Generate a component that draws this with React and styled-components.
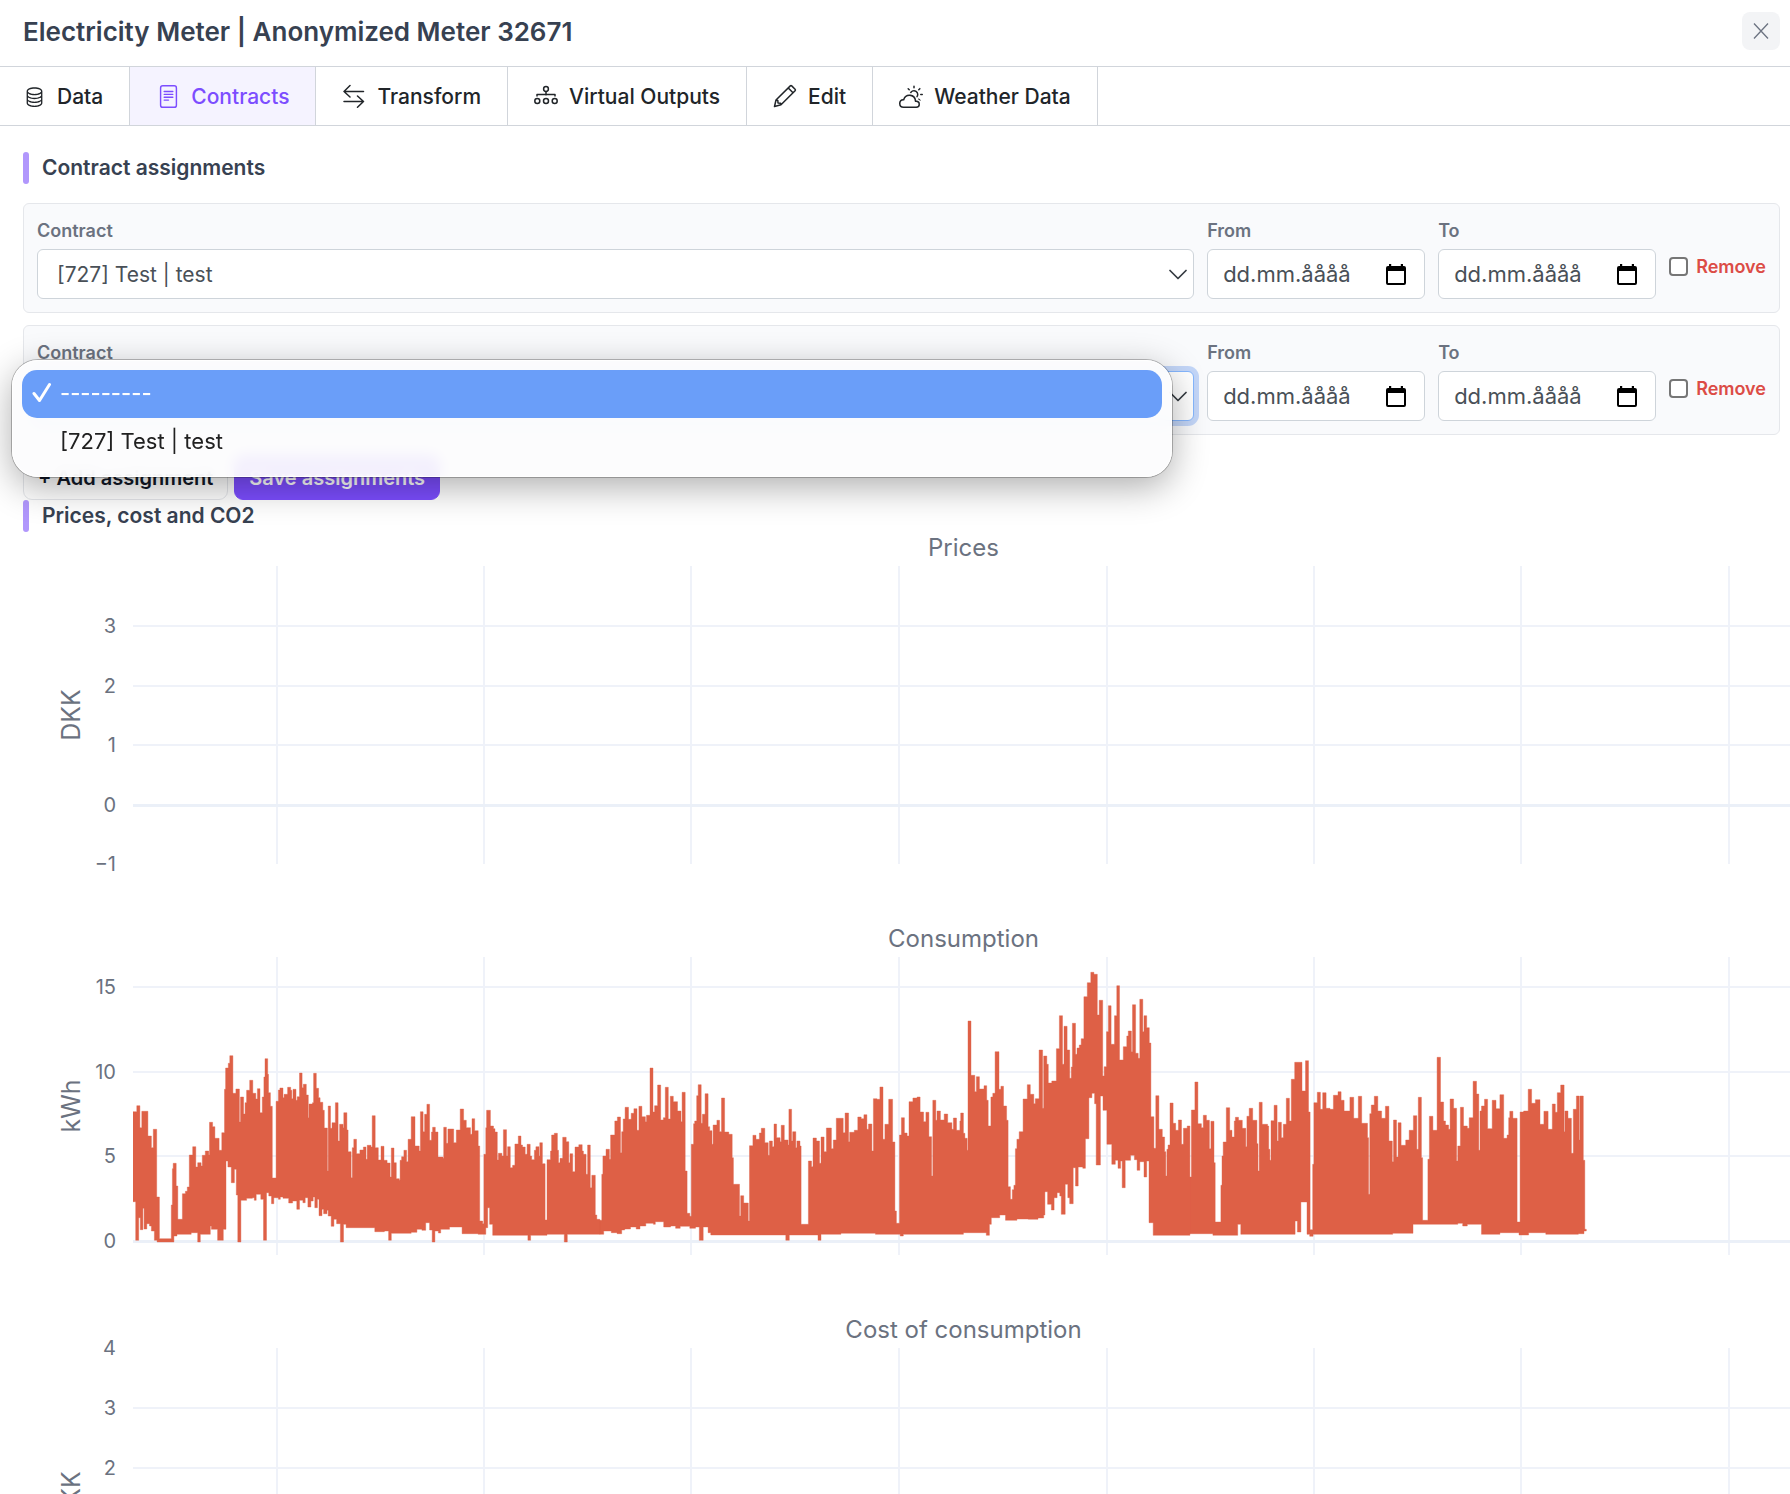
import React from "react";
import styled, { createGlobalStyle } from "styled-components";
import { BsDatabase, BsFileText, BsCloudSun } from "react-icons/bs";

const GlobalStyle = createGlobalStyle`
    *{
        box-sizing: border-box;
    }
    body{
        margin: 0;
        background: #fff;
        color: #212529;
        font-family: Inter, "Liberation Sans", sans-serif;
        font-size: 21px;
    }
    button, input, select{
        font-family: inherit;
    }
`

const TransformIcon = () => (
    <svg width="24" height="24" viewBox="0 0 24 24" fill="none" stroke="currentColor" strokeWidth="1.5" strokeLinecap="round" strokeLinejoin="round">
        <path d="M21.500 7.500H2M8 1.500 2 7.500 8 13M2 17.500H21.500M15.500 12 21.500 17.500 15.500 23.200" />
    </svg>
)

const OutputsIcon = () => (
    <svg width="24" height="24" viewBox="0 0 24 24" fill="none" stroke="currentColor" strokeWidth="1.5">
        <circle cx="12" cy="5" r="2.4" />
        <circle cx="3.3" cy="17" r="2.5" />
        <circle cx="12" cy="17" r="2.5" />
        <circle cx="20.7" cy="17" r="2.5" />
        <path d="M12 7.500v4M3 12.500v-2h18v2" strokeLinejoin="round" />
    </svg>
)

const PencilIcon = () => (
    <svg width="24" height="24" viewBox="0 0 24 24" fill="none" stroke="currentColor" strokeWidth="1.5" strokeLinejoin="round">
        <path d="M1.500 22.500 3 16 17.300 1.900Q18 1.200 18.700 1.900L22.100 5.300Q22.800 6 22.100 6.700L8 20.800ZM15.300 4 20 8.700M3 16 4.800 16.400 5 18.900 7.600 19.200 8 20.800" />
    </svg>
)

const CloseIcon = () => (
    <svg width="16" height="18" viewBox="0 0 16 18" fill="none" stroke="currentColor" strokeWidth="1.3">
        <path d="M1 1.500 15 16.500M15 1.500 1 16.500" />
    </svg>
)

const ChevronIcon = () => (
    <svg width="18" height="11" viewBox="0 0 18 11" fill="none" stroke="#343a40" strokeWidth="1.7" strokeLinecap="round" strokeLinejoin="round">
        <path d="M1 1.500 9 9.500 17 1.500" />
    </svg>
)

const CalendarIcon = () => (
    <svg width="20" height="21" viewBox="0 0 20 21">
        <path fill="#000" fillRule="evenodd" d="M3 0h2.200v2h9.600V0H17v2h1q2 0 2 2v15q0 2-2 2H2q-2 0-2-2V4q0-2 2-2h1ZM2 7v12h16V7Z" />
    </svg>
)

const CheckIcon = () => (
    <svg width="20" height="21" viewBox="0 0 20 21" fill="none" stroke="#fff" strokeWidth="3" strokeLinecap="round" strokeLinejoin="round">
        <path d="M2 11.500 7.500 18.500 17.500 2.500" />
    </svg>
)

const tabs = [
    { name: "Data", icon: <BsDatabase size={21} /> },
    { name: "Contracts", icon: <BsFileText size={23} />, active: true },
    { name: "Transform", icon: <TransformIcon /> },
    { name: "Virtual Outputs", icon: <OutputsIcon /> },
    { name: "Edit", icon: <PencilIcon /> },
    { name: "Weather Data", icon: <BsCloudSun size={24} /> },
]

// Meter readings as steps: each pair is [time, level] and holds until the next pair.
// The time runs from START, the level falls from 958 (0 kWh) to 198 (15 kWh).
const START = 348
const TIME_PX = 2.6133
const LEVEL_PX = 3

const months = [
    {
        origin: 0,
        end: 1568,
        high: "348,572 358,554 366,620 371,571 387,645 396,680 401,625 410,828 417,953 448,852 451,743 453,727 461,795 465,895 477,818 485,811 490,798 495,702 504,677 512,738 517,725 526,735 529,703 537,690 546,702 548,604 556,617 562,652 573,688 580,635 587,505 590,441 597,427 601,404 609,517 617,504 626,603 629,528 637,579 641,545 645,508 653,478 661,517 669,534 673,503 680,575 686,528 690,468 693,413 700,460 702,515 707,556 712,771 722,541 728,507 732,501 740,530 743,520 752,499 760,508 763,533 766,505 774,538 777,527 783,456 790,500 793,490 801,522 806,590 808,549 817,545 820,457 827,502 833,530 837,544 844,568 848,621 856,750 858,555 864,622 868,605 877,545 884,660 888,610 897,620 899,575 907,627 910,692 918,770 921,680 925,655 932,698 941,687 950,678 957,715 960,673 970,678 973,584 981,680 989,717 996,676 1004,718 1012,726 1020,768 1023,681 1030,725 1036,773 1044,778 1046,718 1050,707 1056,688 1063,722 1067,655 1075,587 1085,675 1096,690 1099,572 1106,632 1110,580 1116,550 1123,658 1128,633 1131,619 1138,633 1145,708 1158,712 1160,619 1167,667 1171,624 1186,665 1193,627 1203,564 1212,598 1219,620 1230,640 1234,593 1241,629 1250,675 1254,900 1262,908 1265,700 1270,620 1272,568 1282,615 1290,623 1294,633 1300,717 1303,697 1312,705 1316,626 1324,705 1327,677 1334,740 1340,733 1346,669 1355,645 1362,672 1366,678 1373,700 1378,670 1386,705 1390,716 1397,688 1401,677 1409,705 1411,665 1418,728 1425,897 1430,716 1439,690 1442,642 1449,637 1457,688 1460,725 1464,712 1471,649 1480,662 1487,725 1490,698 1497,752 1503,678 1513,671 1522,690 1525,700 1532,760 1536,672 1543,800 1547,763 1556,882 1560,895",
        low: "348,842 355,958 363,890 367,926 374,862 377,924 384,908 391,915 396,930 404,958 411,963 455,945 463,940 500,935 517,963 524,940 550,915 553,925 569,958 584,925 591,720 596,738 605,785 613,745 618,822 622,963 630,838 645,832 660,830 665,838 670,820 682,835 689,958 697,815 703,825 710,848 716,830 728,835 733,828 740,832 755,846 765,840 776,865 783,838 792,845 798,830 805,858 813,840 819,828 823,860 830,835 834,884 842,865 846,878 855,868 858,885 866,916 873,895 880,908 890,963 898,910 905,920 980,932 1005,930 1016,958 1023,937 1075,934 1090,925 1103,928 1113,905 1123,927 1130,963 1137,930 1146,936 1152,925 1175,918 1208,938 1250,940 1270,920 1275,860 1280,910 1288,943 1380,958 1387,943 1430,940 1475,963 1483,940",
    },
    {
        origin: 1568,
        end: 1542,
        high: "0,898 5,760 8,705 16,685 25,715 28,642 39,600 46,588 54,695 57,632 61,594 66,559 75,595 82,577 89,563 97,628 102,556 110,587 119,602 122,583 131,441 139,573 143,554 151,492 159,597 166,590 171,499 179,594 184,526 192,542 203,570 212,602 215,514 223,750 228,877 235,886 239,670 245,608 248,600 253,524 257,491 265,607 268,580 275,518 283,617 287,629 293,670 296,612 306,598 313,632 318,531 326,633 337,640 346,710 349,790 365,885 368,824 376,846 388,900 391,674 400,643 408,655 417,636 422,622 431,665 440,703 443,660 451,677 455,609 462,650 471,662 474,613 482,657 492,672 494,565 501,660 504,632 512,680 515,660 523,675 526,910 545,720 553,737 557,651 566,660 574,727 578,648 586,692 592,621 605,683 610,657 618,592 636,635 641,576 650,662 653,634 665,628 674,588 683,593 690,581 698,625 702,609 711,690 715,533 724,535 732,498 740,655 745,610 755,535 765,663 771,870 775,907 783,642 788,590 796,636 803,645 808,542 818,531 829,528 837,573 846,602 852,574 860,647 867,765 870,538 878,598 881,570 890,597 900,579 909,605 920,625 924,591 932,628 941,600 943,576 950,637 954,652 960,688 962,300 970,463 980,512 984,467 992,504 1004,494 1011,538 1015,615 1022,528 1027,517 1033,392 1043,505 1048,496 1055,555 1063,598 1067,797 1073,835 1078,806 1082,793 1086,683 1090,655 1096,632 1106,534 1117,491 1125,520 1134,548 1138,533 1148,387 1157,562 1160,405 1168,430 1172,486 1181,480 1193,383 1201,284 1209,430 1213,316 1221,387 1228,472 1232,438 1235,307 1243,400 1247,381 1253,372 1258,353 1265,227 1274,185 1283,154 1291,160 1300,282 1305,238 1314,465 1318,437 1324,332 1329,254 1336,370 1345,284 1351,194 1358,417 1368,377 1377,345 1381,330 1389,392 1392,251 1400,397 1407,412 1411,235 1419,332 1422,284 1429,320 1436,366 1440,587 1448,682 1453,524 1461,625 1470,648 1476,692 1479,765 1482,685 1485,672 1490,546 1498,607 1505,628 1512,597 1520,670 1525,622 1535,615",
        low: "0,940 10,930 30,935 45,938 57,927 65,924 80,918 95,924 105,915 120,907 140,910 145,902 167,918 185,915 198,922 210,916 235,922 250,918 260,958 270,918 283,935 290,942 486,958 495,942 570,958 578,940 630,937 720,940 785,945 793,940 950,935 1010,943 1018,910 1023,890 1045,882 1060,898 1090,894 1120,895 1145,891 1160,882 1163,812 1170,850 1180,867 1187,830 1195,815 1202,825 1206,880 1216,790 1223,830 1228,848 1237,740 1243,795 1250,738 1262,742 1269,653 1278,530 1286,517 1293,548 1297,732 1308,525 1315,568 1325,670 1338,730 1347,718 1354,742 1361,720 1365,800 1373,718 1387,703 1397,716 1404,748 1411,722 1422,768 1429,720 1435,905 1446,943",
    },
    {
        origin: 3110,
        end: 1036,
        high: "0,768 4,567 13,483 21,608 30,620 35,583 43,598 51,683 55,601 63,725 66,903 81,793 84,705 87,663 95,560 104,628 110,648 116,600 119,589 127,598 137,622 146,677 149,586 155,562 164,598 175,668 178,750 181,544 189,610 203,615 206,685 209,718 212,599 220,553 228,660 231,604 239,650 244,610 252,532 260,600 265,475 274,424 293,510 302,419 310,573 314,926 321,730 324,545 333,514 341,565 347,515 356,562 366,565 375,523 387,512 395,538 403,570 418,529 428,592 440,526 449,607 464,650 467,820 470,578 474,552 482,526 491,570 501,592 511,556 520,660 529,722 532,597 540,708 544,605 552,673 564,657 573,628 584,584 593,685 597,529 605,710 608,898 622,715 626,586 635,628 646,409 655,543 663,600 668,612 676,625 680,534 689,562 697,720 700,675 707,559 715,615 725,622 730,590 740,481 749,519 755,688 758,570 762,555 770,535 778,623 790,538 800,563 810,521 820,652 829,642 833,590 836,571 844,592 855,903 863,573 872,570 884,505 893,547 903,536 915,610 925,571 936,625 947,549 955,574 960,515 969,492 978,632 980,570 988,592 997,697 1002,565 1010,525 1017,657 1019,525 1028,718 1032,925",
        low: "0,938 60,943 125,910 133,940 275,900 281,933 290,843 306,940 313,946 322,940 530,937 583,910 700,907 713,915 725,910 762,940 810,935 860,942 885,935 930,940 1015,938 1030,930",
    },
]

const toSteps = (text, origin, end) => {
    const pairs = text.split(" ").map((pair) => pair.split(",").map(Number))
    return pairs.flatMap(([time, level], i) => {
        const next = i + 1 < pairs.length ? pairs[i + 1][0] : end
        const y = level / LEVEL_PX - 36
        return [time, next].map((t) => `${((t + origin - START) / TIME_PX).toFixed(1)} ${y.toFixed(1)}`)
    })
}

const usage = months
    .map(({ origin, end, high, low }) => `M${toSteps(high, origin, end).concat(toSteps(low, origin, end).reverse()).join("L")}Z`)
    .join("")

const PLOT_WIDTH = 1657
const PLOT_HEIGHT = 298
const gridColumns = [144, 351, 558, 766, 974, 1181, 1388, 1596]

const charts = [
    { title: "Prices", unit: "DKK", ticks: [["3", 60], ["2", 120], ["1", 179], ["0", 239], ["−1", 298]] },
    { title: "Consumption", unit: "kWh", ticks: [["15", 30], ["10", 115], ["5", 199], ["0", 284]], line: usage },
    { title: "Cost of consumption", unit: "DKK", ticks: [["4", 0], ["3", 60], ["2", 120]] },
]

const Chart = ({ title, unit, ticks, line }) => (
    <Figure>
        <ChartTitle>{title}</ChartTitle>
        <Axis aria-hidden="true">
            <UnitText x={-149} y={80} textAnchor="middle" transform="rotate(-90)">{unit}</UnitText>
            {ticks.map(([label, y]) => (
                <TickText key={label} x={116} y={y + 7} textAnchor="end">{label}</TickText>
            ))}
        </Axis>
        <Plot viewBox={`0 0 ${PLOT_WIDTH} ${PLOT_HEIGHT}`} preserveAspectRatio="none" role="img" aria-label={title}>
            {gridColumns.map((x) => (
                <rect key={x} x={x - 1} y={0} width={2} height={PLOT_HEIGHT} fill="#eff2f9" />
            ))}
            {ticks.filter(([, y]) => y > 0 && y < PLOT_HEIGHT).map(([label, y]) => (
                <rect key={label} x={0} y={y - 1} width={PLOT_WIDTH} height={label === "0" ? 3 : 2} fill={label === "0" ? "#ebf0f8" : "#eff2f9"} />
            ))}
            {line && <path d={line} fill="#de6046" stroke="#de6046" strokeWidth="0.4" />}
        </Plot>
    </Figure>
)

const Assignment = ({ id, value, open }) => (
    <Card>
        <Field $grow>
            <Label htmlFor={`contract-${id}`}>Contract</Label>
            <Control>
                <Select id={`contract-${id}`} defaultValue={value} $focused={open}>
                    <option value="">---------</option>
                    <option value="727">[727] Test | test</option>
                </Select>
                <SelectArrow><ChevronIcon /></SelectArrow>
            </Control>
            {open && (
                <Menu role="listbox" aria-label="Contract">
                    <Option role="option" aria-selected="true" $selected>
                        <CheckIcon />---------
                    </Option>
                    <Option role="option" aria-selected="false">[727] Test | test</Option>
                </Menu>
            )}
        </Field>
        <Field>
            <Label htmlFor={`from-${id}`}>From</Label>
            <DateBox>
                <DateInput id={`from-${id}`} type="text" placeholder="dd.mm.åååå" />
                <DateButton type="button" aria-label="Choose from date"><CalendarIcon /></DateButton>
            </DateBox>
        </Field>
        <Field>
            <Label htmlFor={`to-${id}`}>To</Label>
            <DateBox>
                <DateInput id={`to-${id}`} type="text" placeholder="dd.mm.åååå" />
                <DateButton type="button" aria-label="Choose to date"><CalendarIcon /></DateButton>
            </DateBox>
        </Field>
        <Remove>
            <Checkbox type="checkbox" id={`remove-${id}`} />
            <label htmlFor={`remove-${id}`}>Remove</label>
        </Remove>
    </Card>
)

const App = () => {
    return(
        <Page>
            <GlobalStyle />
            <Header>
                <h1>Electricity Meter | Anonymized Meter 32671</h1>
                <Close type="button" aria-label="Close"><CloseIcon /></Close>
            </Header>
            <Tabs>
                {tabs.map(({ name, icon, active }) => (
                    <Tab key={name} href="#" $active={active}>
                        <TabIcon>{icon}</TabIcon>
                        {name}
                    </Tab>
                ))}
            </Tabs>
            <Section>
                <Heading>Contract assignments</Heading>
                <Cards>
                    <Assignment id={1} value="727" />
                    <Assignment id={2} value="" open />
                </Cards>
                <Actions>
                    <Button type="button">+ Add assignment</Button>
                    <Button type="button" $primary>Save assignments</Button>
                </Actions>
                <Heading>Prices, cost and CO2</Heading>
            </Section>
            {charts.map((chart) => (
                <Chart key={chart.title} {...chart} />
            ))}
        </Page>
    );
};

const Page = styled.main`
    height: 100vh;
    overflow: hidden;
`
const Header = styled.header`
    display: flex;
    justify-content: space-between;
    align-items: center;
    padding: 12px 10px 16px 23px;

    h1{
        margin: 0;
        padding-top: 2px;
        font-size: 26px;
        line-height: 36px;
        font-weight: 600;
        color: #374151;
    }
`
const Close = styled.button`
    display: flex;
    align-items: center;
    justify-content: center;
    width: 38px;
    height: 38px;
    padding: 0;
    border: 0;
    border-radius: 8px;
    background: #f3f4f6;
    color: #6b7280;
`
const Tabs = styled.nav`
    display: flex;
    border-top: 1px solid #d1d5db;
    border-bottom: 1px solid #d1d5db;
`
const Tab = styled.a`
    display: flex;
    align-items: center;
    gap: 11px;
    height: 58px;
    padding: 0 26px;
    border-right: 1px solid #d1d5db;
    font-weight: 500;
    text-decoration: none;
    color: ${({ $active }) => ($active ? "#7c4dff" : "#212529")};
    background: ${({ $active }) => ($active ? "#f5f3ff" : "#fff")};

    &:first-child{
        padding-left: 22px;
    }
`
const TabIcon = styled.span`
    display: flex;
    justify-content: center;
    width: 24px;
`
const Section = styled.section`
    padding: 26px 10px 0 23px;
`
const Heading = styled.h2`
    display: flex;
    align-items: center;
    gap: 13px;
    margin: 0;
    font-size: 21px;
    line-height: 32px;
    font-weight: 600;
    color: #374151;

    &::before{
        content: "";
        width: 6px;
        height: 32px;
        border-radius: 3px;
        background: #b197fc;
    }
`
const Cards = styled.div`
    display: flex;
    flex-direction: column;
    gap: 12px;
    margin-top: 19px;
`
const Card = styled.div`
    display: flex;
    gap: 13px;
    padding: 13px;
    border: 1px solid #e5e7eb;
    border-radius: 6px;
    background: #f9fafc;
`
const Field = styled.div`
    position: relative;
    display: flex;
    flex-direction: column;
    gap: 4px;
    min-width: 0;
    flex: ${({ $grow }) => ($grow ? "1" : "0 0 218px")};
`
const Label = styled.label`
    font-size: 18px;
    line-height: 28px;
    font-weight: 600;
    color: #6b7280;
`
const Control = styled.div`
    position: relative;
`
const Select = styled.select`
    display: block;
    width: 100%;
    height: 50px;
    padding: 0 48px 0 19px;
    appearance: none;
    border: 1px solid ${({ $focused }) => ($focused ? "#86b7fe" : "#ced4da")};
    border-radius: 6px;
    background: #fff;
    color: #495057;
    font-size: 21px;
    box-shadow: ${({ $focused }) => ($focused ? "0 0 0 5px #c3d6f8" : "none")};
`
const SelectArrow = styled.span`
    position: absolute;
    top: 0;
    right: 7px;
    height: 50px;
    display: flex;
    align-items: center;
    pointer-events: none;
`
const Menu = styled.ul`
    position: absolute;
    z-index: 2;
    top: 21px;
    left: -25px;
    right: 22px;
    margin: 0;
    padding: 9px 9px 10px;
    list-style: none;
    border: 1px solid #fff;
    border-radius: 26px;
    background: rgba(252, 252, 253, 0.93);
    backdrop-filter: blur(7px);
    box-shadow: 0 0 0 1px rgba(0, 0, 0, 0.25), 0 10px 36px rgba(0, 0, 0, 0.32);
`
const Option = styled.li`
    display: flex;
    align-items: center;
    gap: 8px;
    height: 48px;
    padding-bottom: 3px;
    padding-left: ${({ $selected }) => ($selected ? "10px" : "38px")};
    border-radius: 15px;
    font-size: 22px;
    font-weight: ${({ $selected }) => ($selected ? "500" : "400")};
    color: ${({ $selected }) => ($selected ? "#fff" : "#212121")};
    background: ${({ $selected }) => ($selected ? "#6a9ef9" : "transparent")};
`
const DateBox = styled.div`
    display: flex;
    align-items: center;
    height: 50px;
    padding: 0 18px 0 15px;
    border: 1px solid #ced4da;
    border-radius: 6px;
    background: #fff;
`
const DateInput = styled.input`
    flex: 1;
    width: 100%;
    min-width: 0;
    padding: 0;
    border: 0;
    outline: 0;
    background: transparent;
    font-size: 22px;

    &::placeholder{
        color: #495057;
        opacity: 1;
    }
`
const DateButton = styled.button`
    display: flex;
    padding: 0;
    border: 0;
    background: transparent;
`
const Remove = styled.div`
    display: flex;
    align-items: center;
    gap: 8px;
    padding-top: 16px;
    font-size: 18px;
    font-weight: 600;
    color: #dc4c46;
`
const Checkbox = styled.input`
    width: 19px;
    height: 19px;
    margin: 0;
    appearance: none;
    border: 2px solid #767676;
    border-radius: 4px;
    background: #fff;
`
const Actions = styled.div`
    display: flex;
    gap: 6px;
    margin-top: 20px;
`
const Button = styled.button`
    height: 45px;
    padding: 0 14px;
    border: 1px solid ${({ $primary }) => ($primary ? "#7c4dff" : "#e5e7eb")};
    border-radius: 9px;
    background: ${({ $primary }) => ($primary ? "#7c4dff" : "#fff")};
    color: ${({ $primary }) => ($primary ? "#fff" : "#111827")};
    font-size: 20px;
    font-weight: 600;
`
const Figure = styled.figure`
    display: grid;
    grid-template-columns: 133px 1fr;
    margin: 0 0 59px;
`
const ChartTitle = styled.figcaption`
    grid-column: 2;
    padding: 0 0 2px 4px;
    font-size: 24px;
    line-height: 32px;
    text-align: center;
    color: #6b7280;
`
const Axis = styled.svg`
    grid-column: 1;
    width: 133px;
    height: 298px;
    overflow: visible;
    fill: #6b7280;
`
const UnitText = styled.text`
    font-size: 25px;
`
const TickText = styled.text`
    font-size: 20px;
`
const Plot = styled.svg`
    display: block;
    width: 100%;
    height: 298px;
`

export default App;
